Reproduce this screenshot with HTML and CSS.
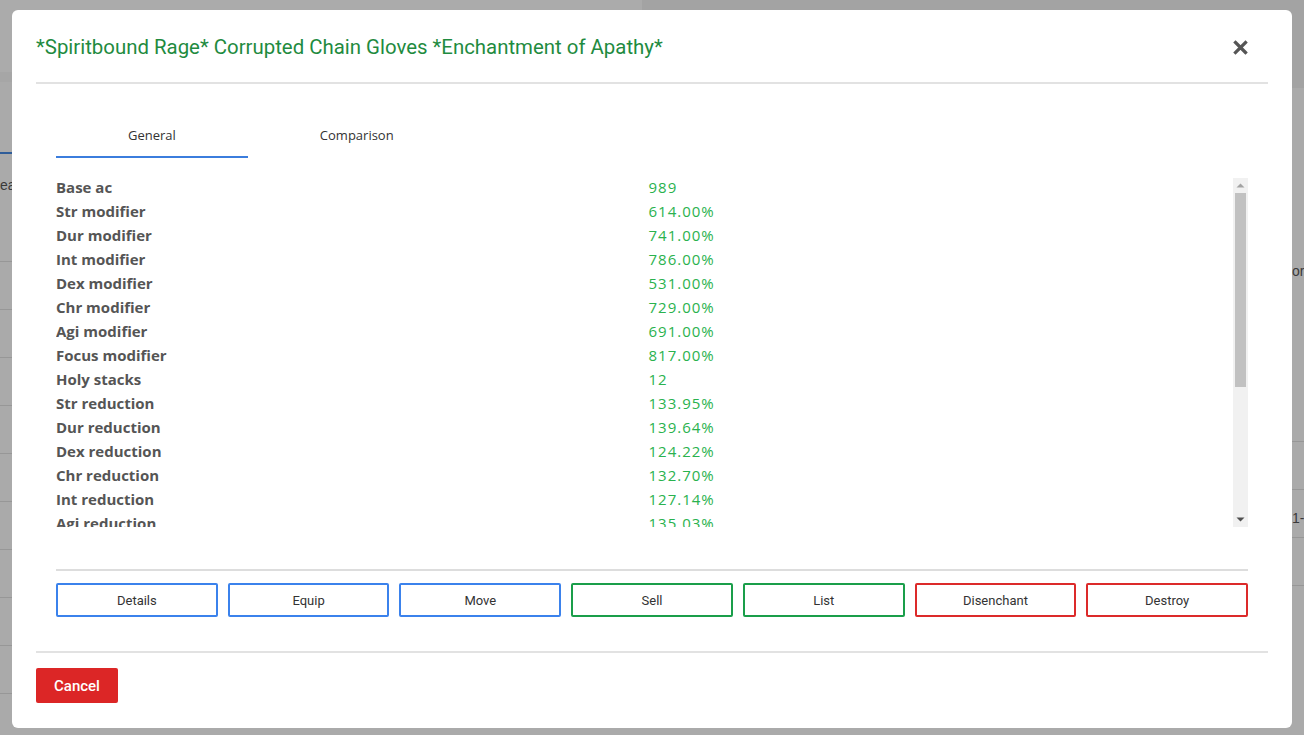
FILE: index.html
```html
<!DOCTYPE html>
<html lang="en">
<head>
<meta charset="utf-8">
<title>Item</title>
<link rel="stylesheet" href="styles.css">
</head>
<body>
<div class="page">
  <div class="page-left">
    <div class="page-top"></div>
    <div class="page-tabline"></div>
    <div class="page-text">ea</div>
    <div class="page-row"></div>
    <div class="page-row"></div>
    <div class="page-row"></div>
    <div class="page-row"></div>
    <div class="page-row"></div>
    <div class="page-row"></div>
    <div class="page-row"></div>
    <div class="page-row"></div>
    <div class="page-row"></div>
    <div class="page-row"></div>
  </div>
  <div class="page-right">
    <div class="page-top-r"></div>
    <div class="page-text-r">or</div>
    <div class="page-gap"></div>
    <div class="page-row-r"></div>
    <div class="page-row-r">1-</div>
    <div class="page-row-r"></div>
  </div>
</div>

<div class="overlay">
  <div class="modal">
    <div class="modal-header">
      <h2 class="modal-title">*Spiritbound Rage* Corrupted Chain Gloves *Enchantment of Apathy*</h2>
      <button class="close-btn" aria-label="Close">
        <svg width="15" height="15" viewBox="0 0 15 15"><path d="M2.5 2.5 L12.5 12.5 M12.5 2.5 L2.5 12.5" stroke="#555" stroke-width="3.2" stroke-linecap="square"/></svg>
      </button>
    </div>
    <div class="modal-body">
      <div class="tabs">
        <div class="tab active">General</div>
        <div class="tab">Comparison</div>
      </div>
      <div class="stats-box">
        <div class="stats">
          <div class="stat"><span class="label">Base ac</span><span class="value">989</span></div>
          <div class="stat"><span class="label">Str modifier</span><span class="value">614.00%</span></div>
          <div class="stat"><span class="label">Dur modifier</span><span class="value">741.00%</span></div>
          <div class="stat"><span class="label">Int modifier</span><span class="value">786.00%</span></div>
          <div class="stat"><span class="label">Dex modifier</span><span class="value">531.00%</span></div>
          <div class="stat"><span class="label">Chr modifier</span><span class="value">729.00%</span></div>
          <div class="stat"><span class="label">Agi modifier</span><span class="value">691.00%</span></div>
          <div class="stat"><span class="label">Focus modifier</span><span class="value">817.00%</span></div>
          <div class="stat"><span class="label">Holy stacks</span><span class="value">12</span></div>
          <div class="stat"><span class="label">Str reduction</span><span class="value">133.95%</span></div>
          <div class="stat"><span class="label">Dur reduction</span><span class="value">139.64%</span></div>
          <div class="stat"><span class="label">Dex reduction</span><span class="value">124.22%</span></div>
          <div class="stat"><span class="label">Chr reduction</span><span class="value">132.70%</span></div>
          <div class="stat"><span class="label">Int reduction</span><span class="value">127.14%</span></div>
          <div class="stat"><span class="label">Agi reduction</span><span class="value">135.03%</span></div>
          <div class="stat"><span class="label">Focus reduction</span><span class="value">129.88%</span></div>
          <div class="stat"><span class="label">Base damage mod</span><span class="value">45.00%</span></div>
          <div class="stat"><span class="label">Base healing mod</span><span class="value">30.00%</span></div>
          <div class="stat"><span class="label">Base ac mod</span><span class="value">50.00%</span></div>
          <div class="stat"><span class="label">Fight time out mod</span><span class="value">15.00%</span></div>
          <div class="stat"><span class="label">Skill training bonus</span><span class="value">10.00%</span></div>
          <div class="stat"><span class="label">Resurrection chance</span><span class="value">5.00%</span></div>
          <div class="stat"><span class="label">Spell evasion</span><span class="value">12.00%</span></div>
          <div class="stat"><span class="label">Healing reduction</span><span class="value">8.00%</span></div>
        </div>
        <div class="scrollbar" aria-hidden="true">
          <div class="sb-btn">
            <svg width="15" height="15" viewBox="0 0 15 15"><path d="M3.5 9.5 L7.5 5.5 L11.5 9.5 Z" fill="#a3a3a3"/></svg>
          </div>
          <div class="sb-thumb"></div>
          <div class="sb-rest"></div>
          <div class="sb-btn">
            <svg width="15" height="15" viewBox="0 0 15 15"><path d="M3.5 5.5 L7.5 9.5 L11.5 5.5 Z" fill="#505050"/></svg>
          </div>
        </div>
      </div>
      <div class="actions">
        <button class="act blue">Details</button>
        <button class="act blue">Equip</button>
        <button class="act blue">Move</button>
        <button class="act green">Sell</button>
        <button class="act green">List</button>
        <button class="act red">Disenchant</button>
        <button class="act red">Destroy</button>
      </div>
    </div>
    <div class="modal-footer">
      <button class="cancel">Cancel</button>
    </div>
  </div>
</div>
</body>
</html>
```

FILE: styles.css
```css
html, body {
  margin: 0;
  padding: 0;
}
body {
  background: #aaaaaa;
  width: 1304px;
  height: 735px;
  overflow: hidden;
  font-family: "Liberation Sans", Arial, sans-serif;
}

/* background page (dimmed) */
.page {
  display: flex;
  height: 735px;
}
.page-left {
  width: 642px;
  display: flex;
  flex-direction: column;
}
.page-top {
  height: 72px;
  background: #ababab;
  border-bottom: 10px solid #a6a6a6;
}
.page-tabline {
  margin-top: 70px;
  height: 2px;
  width: 14px;
  background: #2f5d99;
}
.page-text {
  margin-top: 22px;
  font-size: 14px;
  color: #3a3a3a;
  line-height: 18px;
  height: 38px;
}
.page-row {
  height: 47px;
  border-bottom: 1px solid #979797;
}
.page-right {
  flex: 1;
  display: flex;
  flex-direction: column;
  align-items: flex-end;
}
.page-top-r {
  height: 88px;
  width: 100%;
  background: #a3a3a3;
}
.page-text-r {
  margin-top: 174px;
  width: 12px;
  font-size: 14px;
  color: #3a3a3a;
  line-height: 18px;
  overflow: hidden;
}
.page-gap {
  width: 12px;
  height: 161px;
  border-bottom: 1px solid #979797;
}
.page-row-r {
  width: 12px;
  height: 47px;
  border-bottom: 1px solid #979797;
  font-size: 14px;
  color: #3a3a3a;
  line-height: 56px;
  overflow: hidden;
}

/* overlay + modal */
.overlay {
  position: fixed;
  inset: 0;
}
.modal {
  margin: 10px 12px 0;
  height: 718px;
  box-sizing: border-box;
  background: #ffffff;
  border-radius: 6px;
  padding: 0 24px;
  display: flex;
  flex-direction: column;
}
.modal-header {
  display: flex;
  justify-content: space-between;
  align-items: center;
  padding: 22px 0 20px;
  border-bottom: 2px solid #e2e2e2;
}
.modal-title {
  margin: 0;
  font-family: Roboto, "Liberation Sans", sans-serif;
  font-weight: 400;
  font-size: 20.4px;
  line-height: 30px;
  color: #1f8b3f;
}
.close-btn {
  border: 0;
  background: none;
  padding: 0;
  margin-right: 20px;
  width: 15px;
  height: 15px;
  display: flex;
}

.modal-body {
  padding: 33px 20px 34px;
  border-bottom: 2px solid #e2e2e2;
}
.tabs {
  display: flex;
}
.tab {
  padding: 0 72px 3px;
  line-height: 36px;
  border-bottom: 2px solid transparent;
  font-family: "Open Sans", "Noto Sans", sans-serif;
  font-size: 13px;
  color: #333;
}
.tab.active {
  border-bottom-color: #3b7ddd;
}
.stats-box {
  margin-top: 20px;
  height: 349px;
  display: flex;
}
.stats {
  flex: 1;
  overflow: hidden;
}
.scrollbar {
  width: 15px;
  background: #f1f1f1;
  display: flex;
  flex-direction: column;
}
.sb-btn {
  height: 15px;
  display: flex;
}
.sb-thumb {
  height: 194px;
  margin: 0 2px;
  background: #c1c1c1;
}
.sb-rest {
  flex: 1;
}
.stat {
  display: grid;
  grid-template-columns: 1fr 1fr;
  height: 24px;
  line-height: 18px;
  font-family: "Open Sans", "Noto Sans", sans-serif;
  font-size: 15px;
}
.label {
  font-weight: 700;
  color: #555555;
}
.value {
  padding-left: 4px;
  letter-spacing: 1px;
  color: #2ab24e;
}
.actions {
  margin-top: 42px;
  border-top: 2px solid #dddddd;
  padding-top: 12px;
  display: grid;
  grid-template-columns: repeat(7, 1fr);
  gap: 10px;
}
.act {
  height: 34px;
  background: #fff;
  border: 2px solid;
  border-radius: 2px;
  font-family: Roboto, "Liberation Sans", sans-serif;
  font-size: 13px;
  color: #333;
  padding: 0;
}
.act.blue { border-color: #3b82ec; }
.act.green { border-color: #1a9e4a; }
.act.red { border-color: #dc2a2a; }

.modal-footer {
  padding-top: 15px;
}
.cancel {
  width: 82px;
  height: 35px;
  background: #dc2626;
  border: 0;
  border-radius: 2px;
  color: #fff;
  font-family: Roboto, "Liberation Sans", sans-serif;
  font-weight: 500;
  font-size: 15px;
  padding: 0;
}
```
